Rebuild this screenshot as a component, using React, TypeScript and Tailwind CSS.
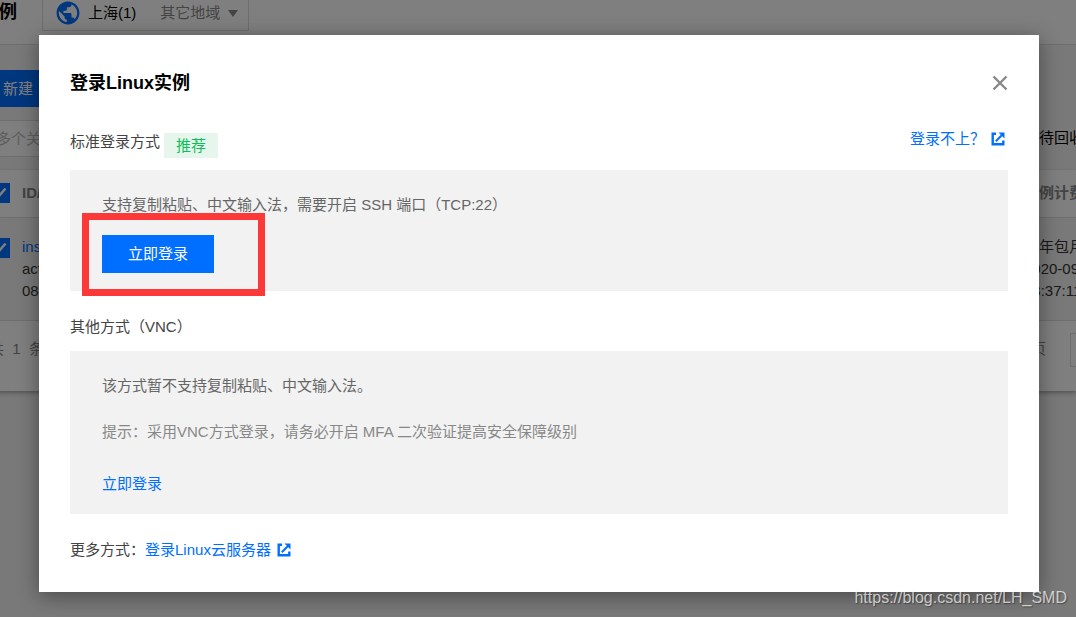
import type { ReactNode } from "react";

function ExternalIcon() {
  return (
    <svg className="h-[14px] w-[14px] shrink-0" viewBox="0 0 14 14" fill="none" stroke="currentColor" aria-hidden="true">
      <path d="M5 1.700H1.700v10.600h10.600V8.500" strokeWidth="2.400" />
      <path d="M7.500 0.500H13.500V6.500z" fill="currentColor" stroke="none" />
      <path d="M4.800 9.200L11 3" strokeWidth="2" />
    </svg>
  );
}

function GlobeIcon() {
  return (
    <svg className="h-6 w-6" viewBox="1.500 1.500 21 21" aria-hidden="true">
      <circle cx="12" cy="12" r="9" fill="#fff" />
      <path
        fill="#006eff"
        d="M12 2C6.480 2 2 6.480 2 12s4.480 10 10 10 10-4.480 10-10S17.520 2 12 2zm-1 17.930c-3.950-.49-7-3.850-7-7.930 0-.62.08-1.210.21-1.790L9 15v1c0 1.100.9 2 2 2v1.930zm6.900-2.540c-.26-.81-1-1.390-1.900-1.390h-1v-3c0-.55-.45-1-1-1H8v-2h2c.55 0 1-.45 1-1V7h2c1.100 0 2-.9 2-2v-.41c2.930 1.190 5 4.060 5 7.410 0 2.080-.8 3.970-2.100 5.390z"
      />
    </svg>
  );
}

function Check({ label }: { label: string }) {
  return (
    <label className="relative block h-5 w-5">
      <input type="checkbox" defaultChecked aria-label={label} className="block h-5 w-5 appearance-none bg-[#006eff]" />
      <svg className="pointer-events-none absolute inset-0" viewBox="0 0 20 20" fill="none" stroke="#fff" strokeWidth="2.5" aria-hidden="true">
        <path d="M4.500 9.500l4 4 7-8" />
      </svg>
    </label>
  );
}

function Panel({ children }: { children: ReactNode }) {
  return <div className="relative bg-[#f2f2f2] px-8 text-[#666]">{children}</div>;
}

function InstancePage() {
  return (
    <div className="-ml-5 min-h-screen bg-[#f2f2f2]" aria-hidden="true">
      <header className="flex h-[45px] items-start border-b border-[#ddd] bg-white pl-px">
        <h1 className="w-[61px] text-lg leading-6 font-bold text-black">实例</h1>
        <div className="flex h-[31px] w-[207px] items-center border-x border-b border-[#ddd] pb-1 pl-[13px] leading-6">
          <GlobeIcon />
          <span className="ml-2 text-black">上海(1)</span>
          <span className="ml-6 text-[#888]">其它地域</span>
          <svg className="ml-2 h-[7px] w-[10px]" viewBox="0 0 10 7" fill="#888">
            <path d="M0 0h10L5 7z" />
          </svg>
        </div>
      </header>
      <div className="pt-[25px]">
        <button type="button" className="block h-[37px] w-20 bg-[#006eff] pt-[2px] pl-[23px] text-left text-white">
          新建
        </button>
      </div>
      <div className="mt-[13px] flex h-[37px] items-center justify-between">
        <div className="h-full w-80 border border-[#ddd] bg-white pl-[15px] leading-[35px] text-[#bbb]">多个关键</div>
        <span className="w-[52px] overflow-hidden whitespace-nowrap pl-[15px] text-black">待回收</span>
      </div>
      <div className="mt-[13px] bg-white shadow-[0_2px_4px_rgba(0,0,0,0.3)]">
        <table className="w-full table-fixed border-collapse text-left">
          <thead>
            <tr className="h-[47px] border-b border-[#ddd] text-[#888]">
              <th className="w-[42px] pl-[10px]"><Check label="全选" /></th>
              <th>ID/名称</th>
              <th className="w-[52px] overflow-hidden whitespace-nowrap">实例计费</th>
            </tr>
          </thead>
          <tbody>
            <tr className="h-[103px] border-b border-[#ddd] bg-[#f2f2f2] align-top leading-[22px] text-[#333]">
              <td className="pt-5 pl-[10px]"><Check label="选择实例" /></td>
              <td className="pt-[18px]">
                <div className="text-[#006eff]">ins-</div>
                <div>act</div>
                <div>08</div>
              </td>
              <td className="overflow-hidden pt-[18px] whitespace-nowrap">
                <div>包年包月</div>
                <div>2020-09</div>
                <div>13:37:11</div>
              </td>
            </tr>
          </tbody>
        </table>
        <div className="flex h-[70px] items-center justify-between pb-3 pl-[9px] text-[#888]">
          <span>共&nbsp; 1 &nbsp;条</span>
          <div className="flex items-center gap-6">
            <span>页</span>
            <span className="h-[34px] w-[6px] border-y border-l border-[#ddd]" />
          </div>
        </div>
      </div>
    </div>
  );
}

export default function App() {
  return (
    <div className="relative min-h-screen overflow-hidden font-['Liberation_Sans','Noto_Sans_CJK_SC',sans-serif] text-[15px]">
      <InstancePage />
      <div className="absolute inset-0 bg-black/50 pt-[35px] pr-[37px] pl-[39px]">
        <section
          role="dialog"
          aria-modal="true"
          aria-labelledby="login-title"
          className="bg-white px-[31px] pt-9 pb-[30px] leading-6 text-[#444] shadow-[0_4px_20px_rgba(0,0,0,0.4)]"
        >
          <div className="flex items-center justify-between">
            <h2 id="login-title" className="text-lg leading-6 font-bold text-black">登录Linux实例</h2>
            <button type="button" aria-label="关闭" className="text-[#888]">
              <svg className="h-4 w-4" viewBox="0 0 16 16" fill="none" stroke="currentColor" strokeWidth="2.400" aria-hidden="true">
                <path d="M1.500 1.500l13 13M14.500 1.500l-13 13" />
              </svg>
            </button>
          </div>

          <div className="mt-8 flex items-start justify-between pb-[11px]">
            <div className="flex items-start gap-1 pt-[3px]">
              <h3>标准登录方式</h3>
              <span className="mt-[3px] bg-[#e7f6ec] px-3 leading-[25px] text-[#0abf5b]">推荐</span>
            </div>
            <a href="#help" className="mr-[3px] flex items-center gap-[6px] text-[#006eff]">
              登录不上？
              <ExternalIcon />
            </a>
          </div>

          <div className="pt-px">
            <Panel>
              <div className="pt-[23px] pb-[18px]">
                <p>支持复制粘贴、中文输入法，需要开启 SSH 端口（TCP:22）</p>
                <button type="button" className="mt-[18px] block h-[38px] w-28 bg-[#006eff] text-white">
                  立即登录
                </button>
              </div>
              <div className="pointer-events-none absolute top-[43px] left-3 h-[83px] w-[183px] border-[7px] border-[#fc3838]" />
            </Panel>
          </div>

          <h3 className="mt-6 mb-3">其他方式（VNC）</h3>

          <Panel>
            <div className="pt-[23px] pb-[18px]">
              <p>该方式暂不支持复制粘贴、中文输入法。</p>
              <p className="mt-[22px] text-[#888]">提示：采用VNC方式登录，请务必开启 MFA 二次验证提高安全保障级别</p>
              <a href="#vnc" className="mt-7 inline-block text-[#006eff]">立即登录</a>
            </div>
          </Panel>

          <p className="mt-6 flex items-center">
            更多方式：
            <a href="#more" className="flex items-center gap-[6px] text-[#006eff]">
              登录Linux云服务器
              <ExternalIcon />
            </a>
          </p>
        </section>
      </div>
      <span className="absolute right-[9px] bottom-[7px] text-base leading-6 text-white/70 [text-shadow:1px_1px_1px_rgba(0,0,0,0.4)]">
        https://blog.csdn.net/LH_SMD
      </span>
    </div>
  );
}
